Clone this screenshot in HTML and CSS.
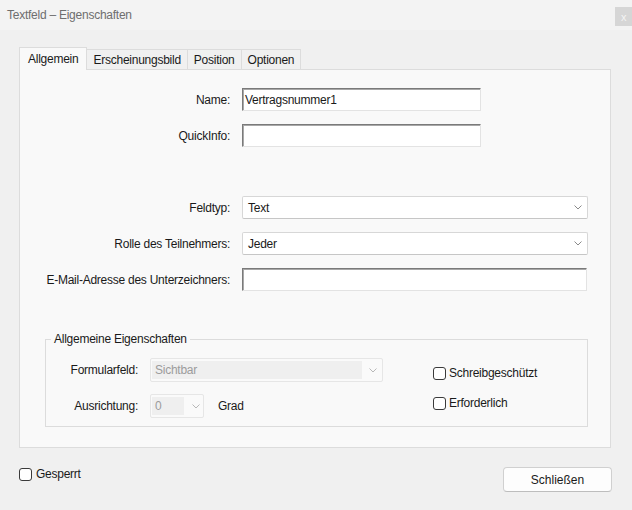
FILE: index.html
```html
<!DOCTYPE html>
<html lang="de">
<head>
<meta charset="utf-8">
<title>Textfeld – Eigenschaften</title>
<link rel="stylesheet" href="styles.css">
</head>
<body>
<div class="window">
  <header class="titlebar">
    <span class="title">Textfeld – Eigenschaften</span>
    <span class="close">x</span>
  </header>
  <main class="content">
    <nav class="tabs">
      <span class="tab active">Allgemein</span>
      <span class="tab">Erscheinungsbild</span>
      <span class="tab">Position</span>
      <span class="tab">Optionen</span>
    </nav>
    <section class="panel">
      <div class="fields">
        <div class="row">
          <label class="label">Name:</label>
          <div class="input short">Vertragsnummer1</div>
        </div>
        <div class="row">
          <label class="label">QuickInfo:</label>
          <div class="input short"></div>
        </div>
        <div class="row spaced">
          <label class="label">Feldtyp:</label>
          <div class="select"><span>Text</span><svg class="chev" width="8" height="5" viewBox="0 0 8 5"><polyline points="0.5,0.5 4,4 7.5,0.5"/></svg></div>
        </div>
        <div class="row">
          <label class="label">Rolle des Teilnehmers:</label>
          <div class="select"><span>Jeder</span><svg class="chev" width="8" height="5" viewBox="0 0 8 5"><polyline points="0.5,0.5 4,4 7.5,0.5"/></svg></div>
        </div>
        <div class="row">
          <label class="label">E-Mail-Adresse des Unterzeichners:</label>
          <div class="input wide"></div>
        </div>
      </div>
      <fieldset class="group">
        <legend>Allgemeine Eigenschaften</legend>
        <div class="group-grid">
          <span class="glabel">Formularfeld:</span>
          <div class="dselect form-field"><span class="value">Sichtbar</span><svg class="chev" width="8" height="5" viewBox="0 0 8 5"><polyline points="0.5,0.5 4,4 7.5,0.5"/></svg></div>
          <span class="glabel">Ausrichtung:</span>
          <div class="orient">
            <div class="dselect angle"><span class="value">0</span><svg class="chev" width="8" height="5" viewBox="0 0 8 5"><polyline points="0.5,0.5 4,4 7.5,0.5"/></svg></div>
            <span>Grad</span>
          </div>
        </div>
        <div class="checks">
          <label class="check"><input type="checkbox"><span>Schreibgeschützt</span></label>
          <label class="check"><input type="checkbox"><span>Erforderlich</span></label>
        </div>
      </fieldset>
    </section>
    <footer class="footer">
      <label class="check locked"><input type="checkbox"><span>Gesperrt</span></label>
      <button class="btn" type="button">Schließen</button>
    </footer>
  </main>
</div>
</body>
</html>
```
FILE: styles.css
```css
* { box-sizing: border-box; }
html, body { margin: 0; padding: 0; }
body {
  width: 632px;
  height: 510px;
  overflow: hidden;
  background: #f0f0f0;
  font-family: "Liberation Sans", Arial, sans-serif;
  font-size: 12px;
  letter-spacing: -0.25px;
  color: #1a1a1a;
}
.titlebar {
  height: 30px;
  display: flex;
  justify-content: space-between;
  align-items: flex-start;
  background: #f3f3f3;
}
.title {
  padding-left: 7px;
  line-height: 30px;
  color: #6e6e6e;
}
.close {
  margin-top: 7px;
  width: 17px;
  height: 19px;
  background: #d6d6d6;
  color: #f4f4f4;
  font-size: 11px;
  display: flex;
  align-items: center;
  justify-content: center;
}
.content { padding: 17px 21px 0 19px; }
.tabs {
  display: flex;
  align-items: flex-end;
  height: 22px;
  position: relative;
  z-index: 1;
}
.tab {
  height: 20px;
  padding: 1px 6px 0;
  line-height: 19px;
  border: 1px solid #dcdcdc;
  border-bottom: none;
  margin-left: -1px;
  background: #f0f0f0;
}
.tab.active {
  height: 23px;
  margin-left: 0;
  margin-bottom: -1px;
  padding: 2px 8px 0;
  line-height: 19px;
  background: #f9f9f9;
  position: relative;
  z-index: 2;
}
.panel {
  background: #f9f9f9;
  border: 1px solid #dcdcdc;
  padding: 18px 22px 20px 0;
}
.fields {
  display: flex;
  flex-direction: column;
  gap: 13px;
}
.row {
  display: flex;
  align-items: center;
  height: 23px;
}
.row.spaced { margin-top: 36px; }
.label {
  flex: none;
  width: 210px;
  margin-right: 12px;
  text-align: right;
}
.input {
  height: 23px;
  background: #fff;
  border: 1px solid;
  border-color: #7a7a7a #e3e3e3 #e3e3e3 #7a7a7a;
  box-shadow: inset 1px 1px 0 #a8a8a8;
  padding: 0 2px;
  display: flex;
  align-items: center;
}
.input.short { width: 239px; }
.input.wide { flex: 1; margin-right: 1px; }
.select {
  flex: 1;
  height: 23px;
  background: #fff;
  border: 1px solid #d7d7d7;
  border-bottom-color: #c6c6c6;
  border-radius: 2px;
  display: flex;
  align-items: center;
  justify-content: space-between;
  padding: 0 5px 0 5px;
}
.chev { flex: none; }
.chev polyline { fill: none; stroke: #8a8a8a; stroke-width: 1; }
.group {
  margin: 40px 0 0 25px;
  padding: 11px 0 8px 0;
  border: 1px solid #dcdcdc;
  display: flex;
  align-items: flex-start;
  min-width: 0;
}
.group legend {
  margin-left: 5px;
  padding: 0 3px;
  line-height: 16px;
}
.group-grid {
  display: grid;
  grid-template-columns: 92px auto;
  column-gap: 12px;
  row-gap: 12px;
  align-items: center;
}
.glabel { text-align: right; }
.dselect {
  height: 24px;
  border: 1px solid #e6e6e6;
  border-radius: 2px;
  background: #fafafa;
  display: flex;
  align-items: center;
  padding: 2px 5px 2px 1px;
}
.dselect .value {
  height: 18px;
  background: #efefef;
  color: #9c9c9c;
  display: flex;
  align-items: center;
  padding-left: 3px;
}
.dselect .chev polyline { stroke: #b8b8b8; }
.form-field { width: 233px; }
.form-field .value { width: 211px; margin-right: 7px; }
.angle { width: 54px; padding-right: 3px; }
.angle .value { width: 33px; margin-right: 8px; }
.orient {
  display: flex;
  align-items: center;
  gap: 14px;
}
.checks {
  margin-left: 50px;
  padding-top: 9px;
  display: flex;
  flex-direction: column;
  gap: 17px;
}
.check {
  display: flex;
  align-items: center;
  gap: 3px;
  line-height: 13px;
}
.check input {
  appearance: none;
  -webkit-appearance: none;
  margin: 0;
  width: 13px;
  height: 13px;
  border: 1px solid #3a3a3a;
  border-radius: 3px;
  background: #fff;
}
.footer {
  display: flex;
  justify-content: space-between;
  align-items: flex-start;
  margin: 19px -1px 0 0;
}
.locked { margin-top: 1px; gap: 4px; }
.btn {
  width: 109px;
  height: 25px;
  border: 1px solid #d0d0d0;
  border-bottom-color: #bdbdbd;
  border-radius: 4px;
  background: #fdfdfd;
  font: inherit;
  color: #1a1a1a;
  padding: 0;
}
```
